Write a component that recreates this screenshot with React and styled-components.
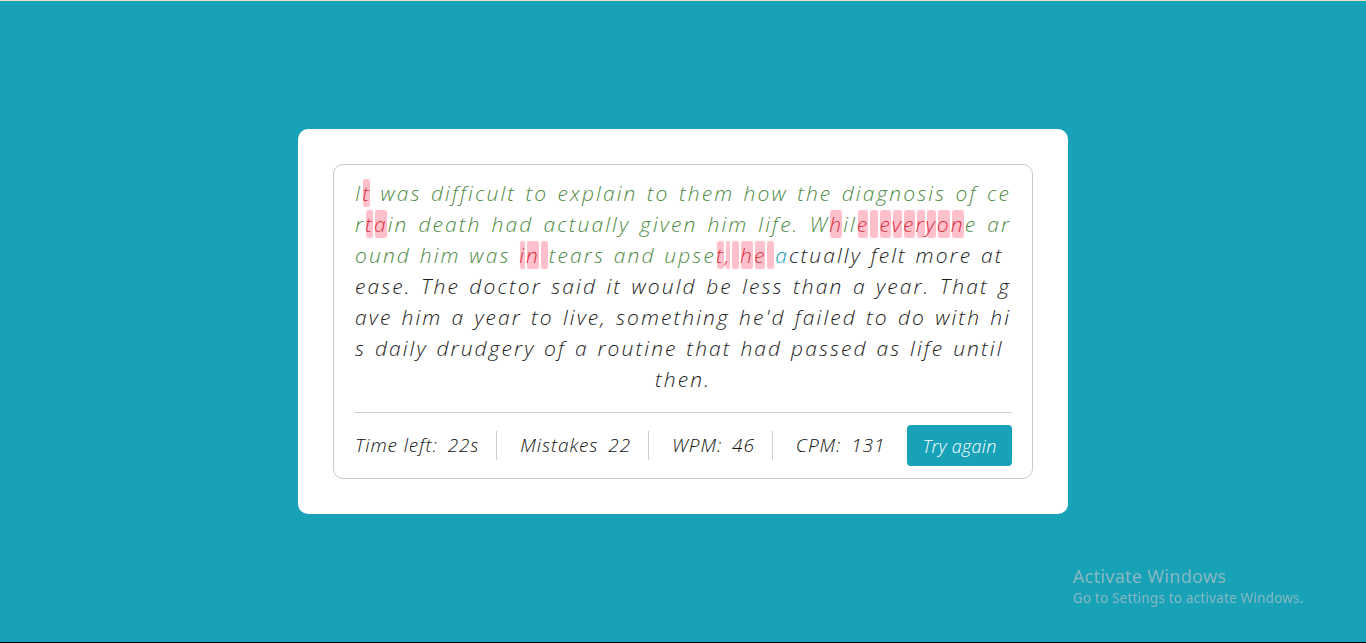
import React from 'react';
import styled, { createGlobalStyle } from 'styled-components';

const GlobalStyle = createGlobalStyle`
  html, body { margin: 0; padding: 0; }
  body {
    background: #17a2b8;
    font-family: 'Open Sans', 'Noto Sans', sans-serif;
  }
`;

const Page = styled.main`
  box-sizing: border-box;
  height: 100vh;
  border-top: 1px solid #f1dccb;
  border-bottom: 1px solid #000;
  display: flex;
  align-items: center;
  justify-content: center;
`;

const Card = styled.section`
  background: #fff;
  border-radius: 10px;
  padding: 35px;
  width: 700px;
`;

const Box = styled.div`
  box-sizing: border-box;
  border: 1px solid #cacaca;
  border-radius: 10px;
  padding: 13px 20px 12px;
`;

const TextBlock = styled.div`
  padding: 0 1px;
  font-size: 21px;
  line-height: 31px;
  font-style: italic;
  font-weight: 300;
  letter-spacing: 2.1px;
  color: #1c1c1c;
`;

const Line = styled.div`
  white-space: pre;
  text-align: ${(p) => (p.$last ? 'center' : 'justify')};
  text-align-last: ${(p) => (p.$last ? 'center' : 'justify')};
`;

const Char = styled.span`
  color: ${(p) =>
    p.$status === 'correct'
      ? '#4f8a46'
      : p.$status === 'wrong'
      ? '#d9303f'
      : p.$status === 'active'
      ? '#139db4'
      : '#1c1c1c'};
  ${(p) =>
    p.$status === 'wrong' &&
    `
    background: #ffc0cb;
    border-radius: 4px;
    box-shadow: inset 0 0 0 1px #fff;
    padding: 1px 0;
  `}
`;

const Footer = styled.div`
  margin-top: 17px;
  border-top: 1px solid #cfcfcf;
  padding-top: 12px;
  display: flex;
  align-items: center;
  justify-content: space-between;
`;

const Stats = styled.ul`
  list-style: none;
  margin: 0;
  padding: 0;
  display: flex;
  align-items: center;
`;

const Stat = styled.li`
  font-size: 19px;
  line-height: 29px;
  font-style: italic;
  font-weight: 300;
  letter-spacing: 0.9px;
  color: #111;
  padding: 0 17px 0 23px;
  border-left: 1px solid #cfcfcf;
  &:first-child {
    border-left: none;
    padding-left: 1px;
  }
`;

const Value = styled.span`
  margin-left: 10px;
`;

const Button = styled.button`
  width: 105px;
  height: 41px;
  border: none;
  border-radius: 4px;
  background: #17a2b8;
  color: #fff;
  font-family: inherit;
  font-style: italic;
  font-weight: 300;
  font-size: 18px;
  letter-spacing: 0.3px;
  cursor: pointer;
`;

const Watermark = styled.div`
  position: fixed;
  left: 1073px;
  top: 564px;
  color: #8bb8c0;
  font-family: 'Noto Sans', 'Open Sans', sans-serif;
`;

const WmTitle = styled.div`
  font-size: 18px;
  line-height: 24px;
  letter-spacing: 0.3px;
`;

const WmSub = styled.div`
  font-size: 13.5px;
  line-height: 20px;
  letter-spacing: 0.2px;
`;

const LINES = [
  'It was difficult to explain to them how the diagnosis of ce',
  'rtain death had actually given him life. While everyone ar',
  'ound him was in tears and upset, he actually felt more at ',
  'ease. The doctor said it would be less than a year. That g',
  "ave him a year to live, something he'd failed to do with hi",
  's daily drudgery of a routine that had passed as life until ',
  'then.',
];

const FULL = LINES.join('');

function buildMistakes() {
  const set = new Set();
  const add = (word, offsets) => {
    const base = FULL.indexOf(word);
    offsets.forEach((o) => set.add(base + o));
  };
  add('It was', [1]);
  add('certain', [3, 4]);
  add('While everyone', [1, 4, 5, 6, 7, 8, 9, 10, 11, 12]);
  add('in tears', [0, 1, 2]);
  add('upset, he', [4, 5, 6, 7, 8, 9]);
  return set;
}

const MISTAKES = buildMistakes();
const CURSOR = FULL.indexOf('actually felt');

function statusOf(i) {
  if (i === CURSOR) return 'active';
  if (i > CURSOR) return 'pending';
  return MISTAKES.has(i) ? 'wrong' : 'correct';
}

const STATS = [
  { label: 'Time left:', value: '22s' },
  { label: 'Mistakes', value: '22' },
  { label: 'WPM:', value: '46' },
  { label: 'CPM:', value: '131' },
];

export default function App() {
  let offset = 0;
  return (
    <>
      <GlobalStyle />
      <Page>
        <Card>
          <Box>
            <TextBlock>
              {LINES.map((line, li) => {
                const start = offset;
                offset += line.length;
                return (
                  <Line key={li} $last={li === LINES.length - 1}>
                    {line.split('').map((ch, ci) => (
                      <Char key={ci} $status={statusOf(start + ci)}>
                        {ch}
                      </Char>
                    ))}
                  </Line>
                );
              })}
            </TextBlock>
            <Footer>
              <Stats>
                {STATS.map((s) => (
                  <Stat key={s.label}>
                    {s.label}
                    <Value>{s.value}</Value>
                  </Stat>
                ))}
              </Stats>
              <Button>Try again</Button>
            </Footer>
          </Box>
        </Card>
      </Page>
      <Watermark>
        <WmTitle>Activate Windows</WmTitle>
        <WmSub>Go to Settings to activate Windows.</WmSub>
      </Watermark>
    </>
  );
}
